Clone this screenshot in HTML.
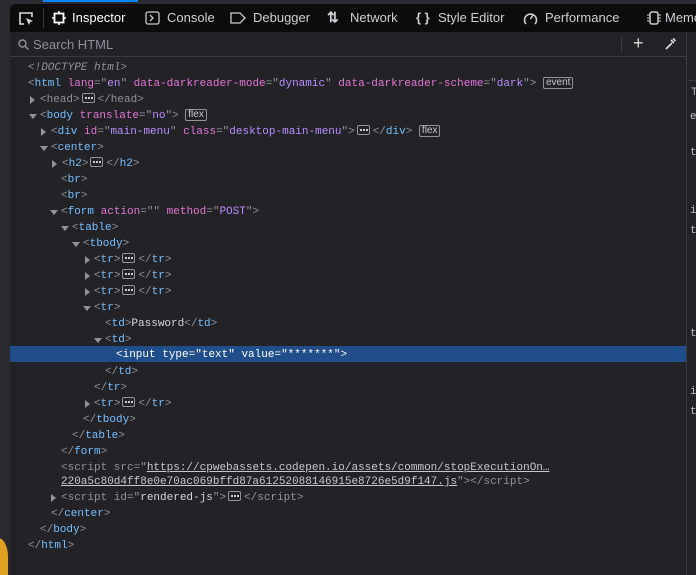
<!DOCTYPE html>
<html style="width:696px;height:575px;overflow:hidden"><head><style>
*{margin:0;padding:0;box-sizing:border-box}
body{width:696px;height:575px;overflow:hidden;background:#2b2a30;position:relative;font-family:"Liberation Sans",sans-serif}
#strip{position:absolute;left:0;top:0;width:10px;height:575px;background:#2a292e}
#blob{position:absolute;left:-12px;top:538px;width:20px;height:37px;border-radius:50% 50% 0 0;background:#e0a020}
#tb{position:absolute;left:10px;top:4px;width:686px;height:28px;background:#0c0c0d;border-top-left-radius:6px;color:#d0d0d4;font-size:13px}
.tab{position:absolute;top:6px;white-space:nowrap}
#ind{position:absolute;left:33px;top:-4px;width:95px;height:2px;background:#0a84ff}
#search{position:absolute;left:10px;top:32px;width:676px;height:25px;background:#232327;border-bottom:1px solid #3a3a40;color:#8f8f9d;font-size:13px}
#main{position:absolute;left:10px;top:57px;width:676px;height:518px;background:#232327}
#side{position:absolute;left:686px;top:32px;width:10px;height:543px;background:#232327;border-left:1px solid #3a3a40;font-family:"Liberation Mono",monospace;font-size:11px;color:#bbb}
.r{position:absolute;left:0;width:676px;height:16px;line-height:16px;margin-top:2px;font-family:"Liberation Mono",monospace;font-size:11px;color:#939395;white-space:pre}
.sel{background:#204e8a;color:#fff;margin-top:0;padding-top:2px;height:16px;line-height:13px}
.t{color:#75bfff}.a{color:#e274d6}.v{color:#b98eff}.x{color:#d7d7db}
.sel .t,.sel .a,.sel .v{color:#fff}
.ar{position:absolute;width:0;height:0}
.ad{border-left:4px solid transparent;border-right:4px solid transparent;border-top:5px solid #939395;margin-top:8px}
.rt{border-top:4px solid transparent;border-bottom:4px solid transparent;border-left:5px solid #939395;margin-top:6px}
.b{display:inline-block;border:1px solid #939395;border-radius:2px;color:#c8c8cc;font-family:"Liberation Sans",sans-serif;font-size:10px;line-height:10px;padding:0 2px;vertical-align:1px}
.d{display:inline-block;width:13px;height:10px;border:1px solid #939395;border-radius:2px;vertical-align:-1px;position:relative;margin:0 3px 0 2px}
.d:after{content:"";position:absolute;left:2px;top:3px;width:2px;height:2px;background:#ccc;box-shadow:3px 0 #ccc,6px 0 #ccc}
.u{text-decoration:underline;color:#c8c8cc}
</style></head><body>
<div id="strip"><div id="blob"></div></div>
<div id="tb">
<div id="ind"></div>
<svg style="position:absolute;left:8px;top:7px" width="16" height="15" viewBox="0 0 16 15"><path d="M6 13H2V2h12v4" fill="none" stroke="#ddd" stroke-width="1.6"/><path d="M8 7l7 3-3 1-1 3z" fill="#ddd"/></svg>
<div style="position:absolute;left:33px;top:4px;width:1px;height:20px;background:#3a3a40"></div>
<svg style="position:absolute;left:42px;top:7px" width="14" height="14" viewBox="0 0 14 14"><rect x="2.5" y="2.5" width="9" height="9" fill="none" stroke="#fff" stroke-width="1.8"/><path d="M7 0v2.5M7 11.5V14M0 7h2.5M11.5 7H14" stroke="#fff" stroke-width="1.6"/></svg>
<div class="tab" style="left:62px;color:#fff">Inspector</div>
<svg style="position:absolute;left:135px;top:7px" width="15" height="14" viewBox="0 0 15 14"><rect x="1" y="1" width="13" height="12" rx="2" fill="none" stroke="#ccc" stroke-width="1.3"/><path d="M5 4l3 3-3 3" fill="none" stroke="#ccc" stroke-width="1.3"/></svg>
<div class="tab" style="left:157px">Console</div>
<svg style="position:absolute;left:220px;top:8px" width="16" height="12" viewBox="0 0 16 12"><path d="M1 1h9l5 5-5 5H1z" fill="none" stroke="#ccc" stroke-width="1.3"/></svg>
<div class="tab" style="left:243px">Debugger</div>
<div class="tab" style="left:317px;font-weight:bold;font-size:14px;top:5px">⇅</div>
<div class="tab" style="left:340px">Network</div>
<div class="tab" style="left:406px;font-weight:bold">{&nbsp;}</div>
<div class="tab" style="left:428px">Style Editor</div>
<svg style="position:absolute;left:513px;top:7px" width="15" height="15" viewBox="0 0 15 15"><path d="M3 13A6 6 0 1 1 12 13" fill="none" stroke="#ccc" stroke-width="1.6"/><path d="M7.5 8L10 4" stroke="#ccc" stroke-width="1.6"/></svg>
<div class="tab" style="left:535px">Performance</div>
<svg style="position:absolute;left:637px;top:7px" width="14" height="14" viewBox="0 0 14 14"><rect x="3" y="1" width="8" height="12" rx="2" fill="none" stroke="#ccc" stroke-width="1.5"/><path d="M0 4h3M0 7h3M0 10h3M11 4h3M11 7h3M11 10h3" stroke="#ccc"/></svg>
<div class="tab" style="left:655px">Memo</div>
</div>
<div id="search">
<svg style="position:absolute;left:8px;top:7px" width="11" height="11" viewBox="0 0 11 11"><circle cx="4.5" cy="4.5" r="3.5" fill="none" stroke="#8f8f9d" stroke-width="1.4"/><path d="M7 7l3.5 3.5" stroke="#8f8f9d" stroke-width="1.5"/></svg>
<div style="position:absolute;left:23px;top:5px">Search HTML</div>
<div style="position:absolute;left:611px;top:5px;width:1px;height:16px;background:#3a3a40"></div>
<div style="position:absolute;left:623px;top:1px;font-size:18px;color:#ddd">+</div>
<svg style="position:absolute;left:654px;top:5px" width="13" height="14" viewBox="0 0 13 14"><path d="M2 12l6-6M7 3l3 3M9 1.5l2.5 2.5" stroke="#ddd" stroke-width="1.6" fill="none"/></svg>
</div>
<div id="main">
<div class="r" style="top:1px;left:18px"><i>&lt;!DOCTYPE html&gt;</i></div>
<div class="r" style="top:17px;left:18px">&lt;<span class="t">html</span> <span class="a">lang</span>="<span class="v">en</span>" <span class="a">data-darkreader-mode</span>="<span class="v">dynamic</span>" <span class="a">data-darkreader-scheme</span>="<span class="v">dark</span>"&gt; <span class="b">event</span></div>
<div class="r" style="top:33px;left:30px">&lt;head&gt;<span class="d"></span>&lt;/head&gt;</div><div class="ar rt" style="left:20px;top:33px"></div>
<div class="r" style="top:49px;left:30px">&lt;<span class="t">body</span> <span class="a">translate</span>="<span class="v">no</span>"&gt; <span class="b">flex</span></div><div class="ar ad" style="left:19px;top:49px"></div>
<div class="r" style="top:65px;left:41px">&lt;<span class="t">div</span> <span class="a">id</span>="<span class="v">main-menu</span>" <span class="a">class</span>="<span class="v">desktop-main-menu</span>"&gt;<span class="d"></span>&lt;/<span class="t">div</span>&gt; <span class="b">flex</span></div><div class="ar rt" style="left:31px;top:65px"></div>
<div class="r" style="top:81px;left:41px">&lt;<span class="t">center</span>&gt;</div><div class="ar ad" style="left:30px;top:81px"></div>
<div class="r" style="top:97px;left:52px">&lt;<span class="t">h2</span>&gt;<span class="d"></span>&lt;/<span class="t">h2</span>&gt;</div><div class="ar rt" style="left:42px;top:97px"></div>
<div class="r" style="top:113px;left:51px">&lt;<span class="t">br</span>&gt;</div>
<div class="r" style="top:129px;left:51px">&lt;<span class="t">br</span>&gt;</div>
<div class="r" style="top:145px;left:51px">&lt;<span class="t">form</span> <span class="a">action</span>="" <span class="a">method</span>="<span class="v">POST</span>"&gt;</div><div class="ar ad" style="left:40px;top:145px"></div>
<div class="r" style="top:161px;left:62px">&lt;<span class="t">table</span>&gt;</div><div class="ar ad" style="left:51px;top:161px"></div>
<div class="r" style="top:177px;left:73px">&lt;<span class="t">tbody</span>&gt;</div><div class="ar ad" style="left:62px;top:177px"></div>
<div class="r" style="top:193px;left:84px">&lt;<span class="t">tr</span>&gt;<span class="d"></span>&lt;/<span class="t">tr</span>&gt;</div><div class="ar rt" style="left:75px;top:193px"></div>
<div class="r" style="top:209px;left:84px">&lt;<span class="t">tr</span>&gt;<span class="d"></span>&lt;/<span class="t">tr</span>&gt;</div><div class="ar rt" style="left:75px;top:209px"></div>
<div class="r" style="top:225px;left:84px">&lt;<span class="t">tr</span>&gt;<span class="d"></span>&lt;/<span class="t">tr</span>&gt;</div><div class="ar rt" style="left:75px;top:225px"></div>
<div class="r" style="top:241px;left:84px">&lt;<span class="t">tr</span>&gt;</div><div class="ar ad" style="left:73px;top:241px"></div>
<div class="r" style="top:257px;left:95px">&lt;<span class="t">td</span>&gt;<span class="x">Password</span>&lt;/<span class="t">td</span>&gt;</div>
<div class="r" style="top:273px;left:95px">&lt;<span class="t">td</span>&gt;</div><div class="ar ad" style="left:84px;top:273px"></div>
<div class="r sel" style="top:289px;left:0;padding-left:106px;line-height:14px;padding-top:2px">&lt;<span class="t">input</span> <span class="a">type</span>="<span class="v">text</span>" <span class="a">value</span>="<span class="v">*******</span>"&gt;</div>
<div class="r" style="top:305px;left:95px">&lt;/<span class="t">td</span>&gt;</div>
<div class="r" style="top:321px;left:84px">&lt;/<span class="t">tr</span>&gt;</div>
<div class="r" style="top:337px;left:84px">&lt;<span class="t">tr</span>&gt;<span class="d"></span>&lt;/<span class="t">tr</span>&gt;</div><div class="ar rt" style="left:75px;top:337px"></div>
<div class="r" style="top:353px;left:73px">&lt;/<span class="t">tbody</span>&gt;</div>
<div class="r" style="top:369px;left:62px">&lt;/<span class="t">table</span>&gt;</div>
<div class="r" style="top:385px;left:51px">&lt;/<span class="t">form</span>&gt;</div>
<div class="r" style="top:401px;left:51px">&lt;script src="<span class="u">https://cpwebassets.codepen.io/assets/common/stopExecutionOn…</span></div>
<div class="r" style="top:415px;left:51px"><span class="u">220a5c80d4ff8e0e70ac069bffd87a61252088146915e8726e5d9f147.js</span>"&gt;&lt;/script&gt;</div>
<div class="r" style="top:431px;left:51px">&lt;script id="<span class="x">rendered-js</span>"&gt;<span class="d"></span>&lt;/script&gt;</div><div class="ar rt" style="left:41px;top:431px"></div>
<div class="r" style="top:447px;left:41px">&lt;/<span class="t">center</span>&gt;</div>
<div class="r" style="top:463px;left:30px">&lt;/<span class="t">body</span>&gt;</div>
<div class="r" style="top:479px;left:18px">&lt;/<span class="t">html</span>&gt;</div>
</div>
<div id="side">
<div style="position:absolute;top:48px;left:0;width:10px;border-top:1px solid #3a3a40"></div>
<div style="position:absolute;left:4px;top:55px">T</div>
<div style="position:absolute;left:3px;top:79px">e</div>
<div style="position:absolute;left:3px;top:115px">t</div>
<div style="position:absolute;left:3px;top:173px">i</div>
<div style="position:absolute;left:3px;top:193px">t</div>
<div style="position:absolute;left:3px;top:296px">t</div>
<div style="position:absolute;left:3px;top:354px">i</div>
<div style="position:absolute;left:3px;top:374px">t</div>
</div>
</body></html>
